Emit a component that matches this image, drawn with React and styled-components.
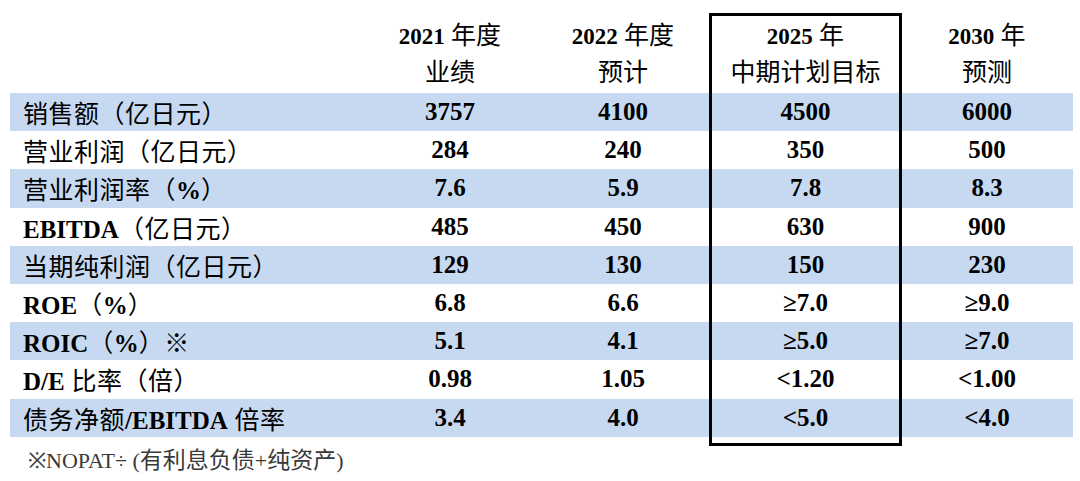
import styled, { createGlobalStyle } from "styled-components";

const Global = createGlobalStyle`
  html, body { margin: 0; padding: 0; background: #fff; }
  body {
    font-family: "Liberation Serif", "Noto Sans CJK SC", serif;
    color: #000;
  }
`;

const COLS = "354px 172px 174px 191px 172px";

const Page = styled.div`
  width: 1080px;
  height: 481px;
  overflow: hidden;
  padding-left: 10px;
  box-sizing: border-box;
`;

const Table = styled.div`
  position: relative;
  width: 1063px;
  display: flex;
  flex-direction: column;
`;

const Head = styled.div`
  display: grid;
  grid-template-columns: ${COLS};
  height: 93px;
  padding-top: 18px;
  box-sizing: border-box;
`;

const HeadCell = styled.div`
  display: flex;
  flex-direction: column;
  align-items: center;
  line-height: 36px;
  font-size: 25px;
  white-space: pre;
`;

const Row = styled.div`
  display: grid;
  grid-template-columns: ${COLS};
  height: 38.2px;
  align-items: center;
  background: ${(p) => (p.$alt ? "#c6d9f0" : "#fff")};
`;

const Label = styled.div`
  padding-left: 13px;
  font-size: 25px;
  letter-spacing: 0.5px;
  white-space: pre;
  display: flex;
  align-items: baseline;
`;

const Lat = styled.span`
  font-family: "Liberation Serif", serif;
  font-weight: 700;
  letter-spacing: 0;
  font-size: ${(p) => p.$size || 25}px;
`;

const Value = styled.div`
  text-align: center;
  font-weight: 700;
  font-size: 25px;
`;

// 2025年目标列的黑框，叠在表格上面
const TargetBox = styled.div`
  position: absolute;
  left: 699px;
  top: 13px;
  width: 193px;
  height: 433px;
  border: 3px solid #000;
  box-sizing: border-box;
  pointer-events: none;
`;

const Note = styled.div`
  margin-top: 11px;
  padding-left: 18px;
  font-size: 23px;
  line-height: 26px;
  color: #3a3a3a;
  white-space: pre;
`;

const NoteLat = styled.span`
  font-family: "Liberation Serif", serif;
  font-size: 22px;
`;

const heads = [
  ["2021", " 年度", "业绩"],
  ["2022", " 年度", "预计"],
  ["2025", " 年", "中期计划目标"],
  ["2030", " 年", "预测"],
];

const rows = [
  [<>销售额（亿日元）</>, "3757", "4100", "4500", "6000"],
  [<>营业利润（亿日元）</>, "284", "240", "350", "500"],
  [<>营业利润率（<Lat>%</Lat>）</>, "7.6", "5.9", "7.8", "8.3"],
  [<><Lat>EBITDA</Lat>（亿日元）</>, "485", "450", "630", "900"],
  [<>当期纯利润（亿日元）</>, "129", "130", "150", "230"],
  [<><Lat>ROE</Lat>（<Lat>%</Lat>）</>, "6.8", "6.6", "≥7.0", "≥9.0"],
  [<><Lat>ROIC</Lat>（<Lat>%</Lat>）※</>, "5.1", "4.1", "≥5.0", "≥7.0"],
  [<><Lat>D/E</Lat> 比率（倍）</>, "0.98", "1.05", "<1.20", "<1.00"],
  [<>债务净额<Lat>/EBITDA</Lat> 倍率</>, "3.4", "4.0", "<5.0", "<4.0"],
];

export default function App() {
  return (
    <Page>
      <Global />
      <Table>
        <Head>
          <div />
          {heads.map(([y, unit, sub]) => (
            <HeadCell key={y}>
              <span>
                <Lat $size={23}>{y}</Lat>
                {unit}
              </span>
              <span>{sub}</span>
            </HeadCell>
          ))}
        </Head>
        {rows.map(([label, ...vals], i) => (
          <Row key={i} $alt={i % 2 === 0}>
            <Label>{label}</Label>
            {vals.map((v, j) => (
              <Value key={j}>{v}</Value>
            ))}
          </Row>
        ))}
        <TargetBox />
      </Table>
      <Note>
        <NoteLat>※NOPAT÷ (</NoteLat>有利息负债<NoteLat>+</NoteLat>纯资产<NoteLat>)</NoteLat>
      </Note>
    </Page>
  );
}
